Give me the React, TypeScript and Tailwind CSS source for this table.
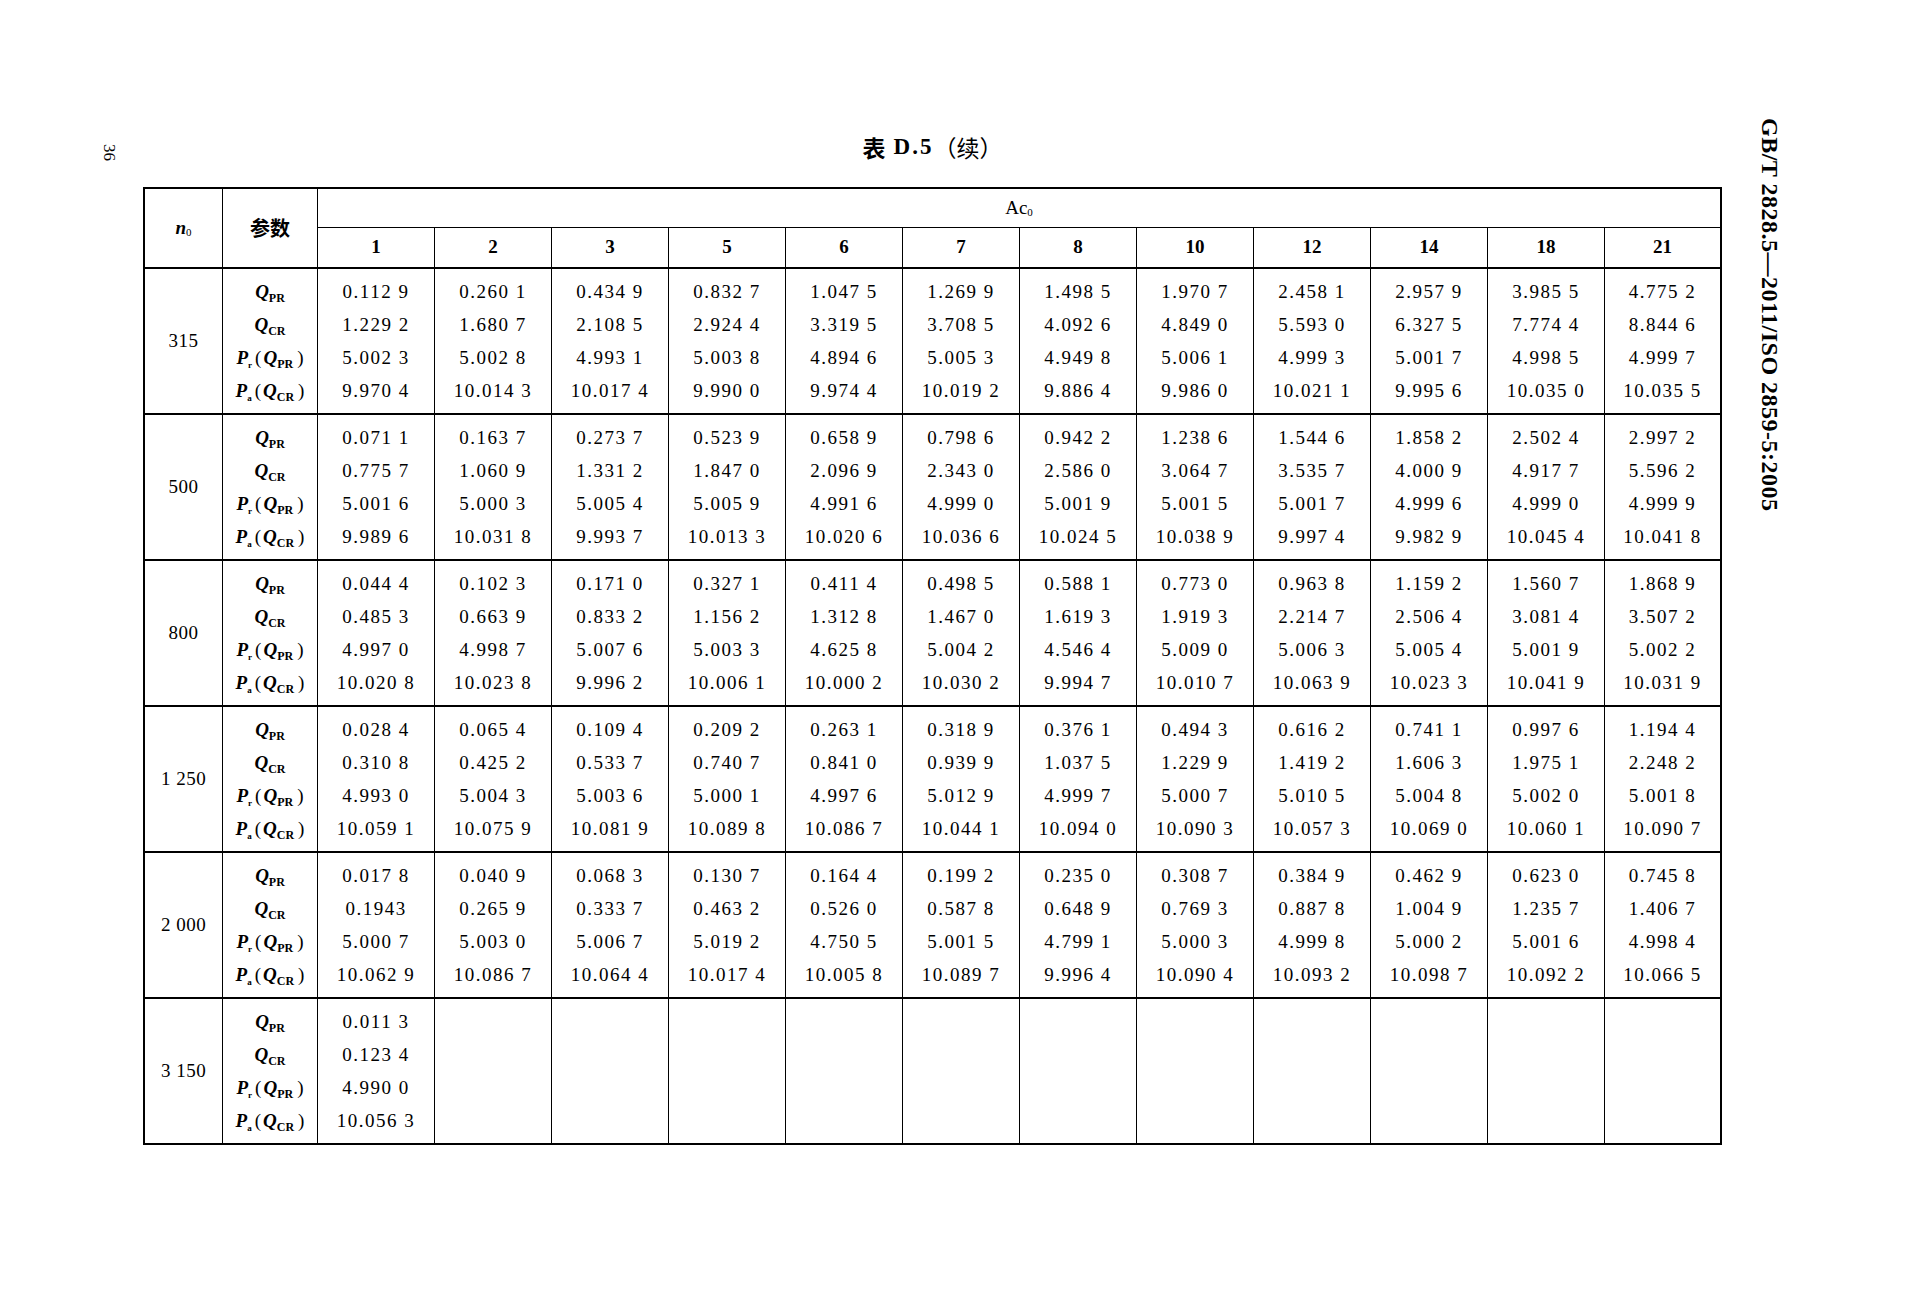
import React from 'react';

const acCols = ['1', '2', '3', '5', '6', '7', '8', '10', '12', '14', '18', '21'];

interface Group {
  n0: string;
  rows: string[][];
}

const groups: Group[] = [
  {
    n0: '315',
    rows: [
      ['0.112 9', '0.260 1', '0.434 9', '0.832 7', '1.047 5', '1.269 9', '1.498 5', '1.970 7', '2.458 1', '2.957 9', '3.985 5', '4.775 2'],
      ['1.229 2', '1.680 7', '2.108 5', '2.924 4', '3.319 5', '3.708 5', '4.092 6', '4.849 0', '5.593 0', '6.327 5', '7.774 4', '8.844 6'],
      ['5.002 3', '5.002 8', '4.993 1', '5.003 8', '4.894 6', '5.005 3', '4.949 8', '5.006 1', '4.999 3', '5.001 7', '4.998 5', '4.999 7'],
      ['9.970 4', '10.014 3', '10.017 4', '9.990 0', '9.974 4', '10.019 2', '9.886 4', '9.986 0', '10.021 1', '9.995 6', '10.035 0', '10.035 5'],
    ],
  },
  {
    n0: '500',
    rows: [
      ['0.071 1', '0.163 7', '0.273 7', '0.523 9', '0.658 9', '0.798 6', '0.942 2', '1.238 6', '1.544 6', '1.858 2', '2.502 4', '2.997 2'],
      ['0.775 7', '1.060 9', '1.331 2', '1.847 0', '2.096 9', '2.343 0', '2.586 0', '3.064 7', '3.535 7', '4.000 9', '4.917 7', '5.596 2'],
      ['5.001 6', '5.000 3', '5.005 4', '5.005 9', '4.991 6', '4.999 0', '5.001 9', '5.001 5', '5.001 7', '4.999 6', '4.999 0', '4.999 9'],
      ['9.989 6', '10.031 8', '9.993 7', '10.013 3', '10.020 6', '10.036 6', '10.024 5', '10.038 9', '9.997 4', '9.982 9', '10.045 4', '10.041 8'],
    ],
  },
  {
    n0: '800',
    rows: [
      ['0.044 4', '0.102 3', '0.171 0', '0.327 1', '0.411 4', '0.498 5', '0.588 1', '0.773 0', '0.963 8', '1.159 2', '1.560 7', '1.868 9'],
      ['0.485 3', '0.663 9', '0.833 2', '1.156 2', '1.312 8', '1.467 0', '1.619 3', '1.919 3', '2.214 7', '2.506 4', '3.081 4', '3.507 2'],
      ['4.997 0', '4.998 7', '5.007 6', '5.003 3', '4.625 8', '5.004 2', '4.546 4', '5.009 0', '5.006 3', '5.005 4', '5.001 9', '5.002 2'],
      ['10.020 8', '10.023 8', '9.996 2', '10.006 1', '10.000 2', '10.030 2', '9.994 7', '10.010 7', '10.063 9', '10.023 3', '10.041 9', '10.031 9'],
    ],
  },
  {
    n0: '1 250',
    rows: [
      ['0.028 4', '0.065 4', '0.109 4', '0.209 2', '0.263 1', '0.318 9', '0.376 1', '0.494 3', '0.616 2', '0.741 1', '0.997 6', '1.194 4'],
      ['0.310 8', '0.425 2', '0.533 7', '0.740 7', '0.841 0', '0.939 9', '1.037 5', '1.229 9', '1.419 2', '1.606 3', '1.975 1', '2.248 2'],
      ['4.993 0', '5.004 3', '5.003 6', '5.000 1', '4.997 6', '5.012 9', '4.999 7', '5.000 7', '5.010 5', '5.004 8', '5.002 0', '5.001 8'],
      ['10.059 1', '10.075 9', '10.081 9', '10.089 8', '10.086 7', '10.044 1', '10.094 0', '10.090 3', '10.057 3', '10.069 0', '10.060 1', '10.090 7'],
    ],
  },
  {
    n0: '2 000',
    rows: [
      ['0.017 8', '0.040 9', '0.068 3', '0.130 7', '0.164 4', '0.199 2', '0.235 0', '0.308 7', '0.384 9', '0.462 9', '0.623 0', '0.745 8'],
      ['0.1943', '0.265 9', '0.333 7', '0.463 2', '0.526 0', '0.587 8', '0.648 9', '0.769 3', '0.887 8', '1.004 9', '1.235 7', '1.406 7'],
      ['5.000 7', '5.003 0', '5.006 7', '5.019 2', '4.750 5', '5.001 5', '4.799 1', '5.000 3', '4.999 8', '5.000 2', '5.001 6', '4.998 4'],
      ['10.062 9', '10.086 7', '10.064 4', '10.017 4', '10.005 8', '10.089 7', '9.996 4', '10.090 4', '10.093 2', '10.098 7', '10.092 2', '10.066 5'],
    ],
  },
  {
    n0: '3 150',
    rows: [
      ['0.011 3', '', '', '', '', '', '', '', '', '', '', ''],
      ['0.123 4', '', '', '', '', '', '', '', '', '', '', ''],
      ['4.990 0', '', '', '', '', '', '', '', '', '', '', ''],
      ['10.056 3', '', '', '', '', '', '', '', '', '', '', ''],
    ],
  },
];

const Sub = ({ children }: { children: React.ReactNode }) => (
  <span className="relative top-[4px] text-[12px] font-bold not-italic">{children}</span>
);

const Q = ({ sub }: { sub: string }) => (
  <span>
    <span className="font-bold italic">Q</span>
    <Sub>{sub}</Sub>
  </span>
);

const P = ({ sub, q }: { sub: string; q: string }) => (
  <span>
    <span className="font-bold italic">P</span>
    <span className="relative top-[4px] text-[9px] font-bold">{sub}</span>
    <span className="ml-[3px] mr-[2px]">(</span>
    <Q sub={q} />
    <span className="ml-[4px]">)</span>
  </span>
);

const labels = [<Q key="a" sub="PR" />, <Q key="b" sub="CR" />, <P key="c" sub="r" q="PR" />, <P key="d" sub="a" q="CR" />];

export default function App() {
  return (
    <div className="w-[1920px] h-[1314px] bg-white text-black flex font-['Liberation_Serif','Noto_Sans_CJK_SC',serif]">
      <div className="w-[143px] shrink-0 pl-[100px] pt-[144px]">
        <div className="[writing-mode:vertical-rl] text-[17px] leading-[18px]">36</div>
      </div>

      <div className="w-[1579px] shrink-0 pt-[127px]">
        <div className="h-[40px] flex items-center justify-center text-[23px] font-bold">
          <span className="font-['Noto_Sans_CJK_SC',sans-serif]">表</span>
          <span className="ml-[8px] tracking-[2px]">D.5</span>
          <span className="font-['Noto_Sans_CJK_SC',sans-serif] font-normal">（续）</span>
        </div>

        <div className="mt-[20px] border-2 border-black grid grid-cols-[78px_95px_repeat(11,117px)_115px] grid-rows-[39px_41px_repeat(5,146px)_144px]">
          <div className="row-span-2 border-r border-b-2 border-black flex items-center justify-center text-[19px]">
            <span className="font-bold italic">n</span>
            <span className="relative top-[4px] text-[11px]">0</span>
          </div>
          <div className="row-span-2 border-r border-b-2 border-black flex items-center justify-center text-[20px] font-bold font-['Noto_Sans_CJK_SC',sans-serif]">
            参数
          </div>
          <div className="col-span-12 border-b border-black flex items-center justify-center text-[19px]">
            <span>Ac</span>
            <span className="relative top-[4px] text-[11px]">0</span>
          </div>
          {acCols.map((c, i) => (
            <div
              key={c}
              className={`border-b-2 border-black flex items-center justify-center text-[19px] font-bold ${i < 11 ? 'border-r' : ''}`}
            >
              {c}
            </div>
          ))}

          {groups.map((g, gi) => {
            const last = gi === groups.length - 1;
            const rowLine = last ? '' : 'border-b-2';
            return (
              <React.Fragment key={g.n0}>
                <div className={`border-r border-black flex items-center justify-center text-[19px] tracking-[0.5px] ${rowLine}`}>
                  {g.n0}
                </div>
                <div className={`border-r border-black pt-[7px] flex flex-col text-[19px] ${rowLine}`}>
                  {labels.map((l, li) => (
                    <div key={li} className="h-[33px] flex items-center justify-center">
                      {l}
                    </div>
                  ))}
                </div>
                {acCols.map((c, ci) => (
                  <div
                    key={c}
                    className={`border-black pt-[7px] flex flex-col text-[19px] tracking-[1.5px] ${rowLine} ${ci < 11 ? 'border-r' : ''}`}
                  >
                    {g.rows.map((r, ri) => (
                      <div key={ri} className="h-[33px] flex items-center justify-center whitespace-pre">
                        {r[ci]}
                      </div>
                    ))}
                  </div>
                ))}
              </React.Fragment>
            );
          })}
        </div>
      </div>

      <div className="pl-[35px] pt-[118px]">
        <div className="[writing-mode:vertical-rl] text-[24px] leading-[26px] font-bold tracking-[0.5px] whitespace-nowrap">
          GB/T 2828.5—2011/ISO 2859-5:2005
        </div>
      </div>
    </div>
  );
}
